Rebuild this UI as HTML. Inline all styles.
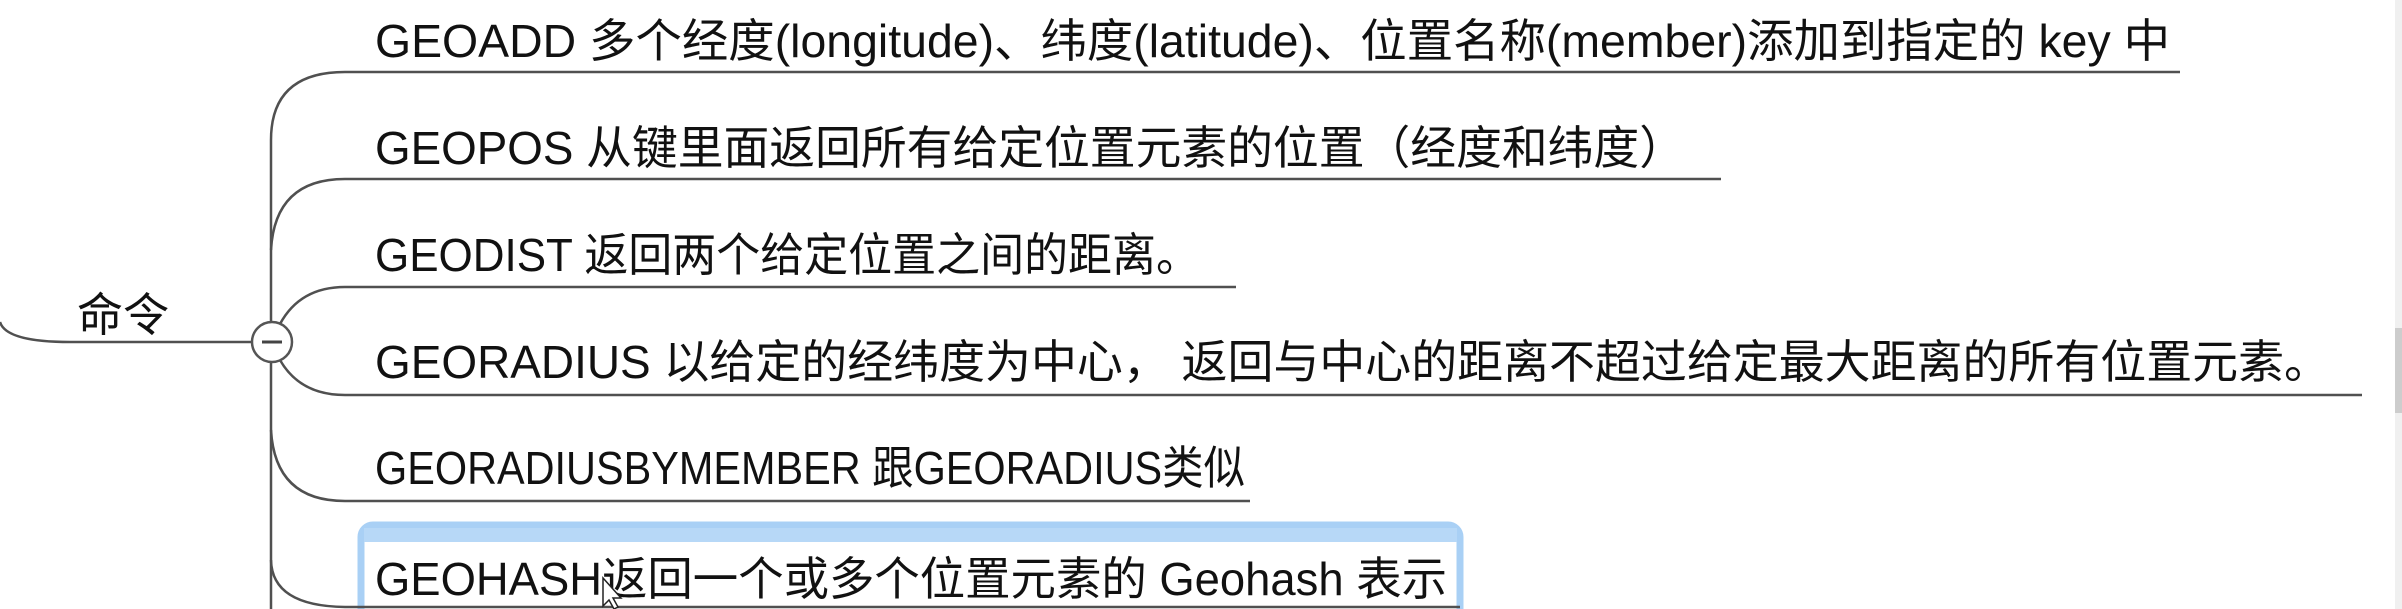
<!DOCTYPE html>
<html><head><meta charset="utf-8"><style>
html,body{margin:0;padding:0;background:#fff;width:2402px;height:609px;overflow:hidden}
svg{display:block}
text{font-family:"Liberation Sans","Noto Sans CJK SC",sans-serif;font-size:46px;fill:#111}
</style></head><body>
<svg width="2402" height="609" viewBox="0 0 2402 609" xmlns="http://www.w3.org/2000/svg">
<rect x="2395" y="0" width="7" height="609" fill="#f0f0f0"/>
<rect x="2395" y="328" width="7" height="85" fill="#cdcdcd"/>
<rect x="361" y="525" width="1099" height="100" rx="12" fill="#fff" stroke="#a9d0f5" stroke-width="7"/>
<rect x="364" y="528" width="1093" height="14" fill="#b7d8f7"/>
<g fill="none" stroke="#505050" stroke-width="2.5">
<path d="M0 322 Q6 342 70 342 L252 342"/>
<path d="M271 140 L271 609"/>
<path d="M271 140 Q271 72 345 72 L2180 72"/>
<path d="M271 250 Q275 179 345 179 L1721 179"/>
<path d="M280 324 Q300 287 345 287 L1236 287"/>
<path d="M280 360 Q300 395 345 395 L2362 395"/>
<path d="M271 430 Q275 501 345 501 L1250 501"/>
<path d="M271 560 Q272 606 345 607 L1460 607"/>
</g>
<circle cx="272" cy="342" r="20" fill="#fff" stroke="#555" stroke-width="2.5"/>
<line x1="262" y1="342" x2="282" y2="342" stroke="#444" stroke-width="3"/>
<text x="77" y="331" font-size="46" textLength="92" lengthAdjust="spacingAndGlyphs">命令</text>
<text x="375" y="57" textLength="1795" lengthAdjust="spacingAndGlyphs">GEOADD  多个经度(longitude)、纬度(latitude)、位置名称(member)添加到指定的 key 中</text>
<text x="375" y="164" textLength="1310" lengthAdjust="spacingAndGlyphs">GEOPOS  从键里面返回所有给定位置元素的位置（经度和纬度）</text>
<text x="375" y="271" textLength="825" lengthAdjust="spacingAndGlyphs">GEODIST 返回两个给定位置之间的距离。</text>
<text x="375" y="378" textLength="1955" lengthAdjust="spacingAndGlyphs">GEORADIUS 以给定的经纬度为中心， 返回与中心的距离不超过给定最大距离的所有位置元素。</text>
<text x="375" y="484" textLength="870" lengthAdjust="spacingAndGlyphs">GEORADIUSBYMEMBER 跟GEORADIUS类似</text>
<text x="375" y="595" textLength="1072" lengthAdjust="spacingAndGlyphs">GEOHASH返回一个或多个位置元素的 Geohash 表示</text>
<path d="M603 578 L603 606 L609 600 L614 609 L618 607 L613 598 L621 598 Z" fill="#fff" stroke="#222" stroke-width="1.5"/>
</svg>
</body></html>
